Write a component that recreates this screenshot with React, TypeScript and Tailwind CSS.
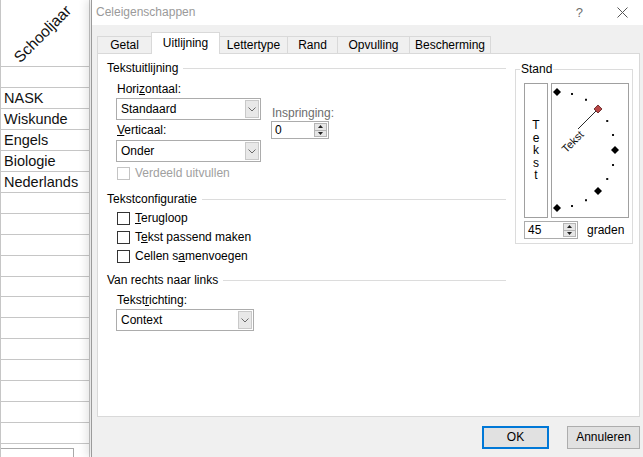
import type { ReactNode } from 'react';

const subjects: string[] = ['NASK', 'Wiskunde', 'Engels', 'Biologie', 'Nederlands'];
const emptyRows: number = 13;

const tabs = [
  { title: 'Getal', width: 'w-[54px]' },
  { title: 'Uitlijning', width: 'w-[69px]', active: true },
  { title: 'Lettertype', width: 'w-[68px]' },
  { title: 'Rand', width: 'w-[50px]' },
  { title: 'Opvulling', width: 'w-[72px]' },
  { title: 'Bescherming', width: 'w-[82px]', last: true },
];

// dial marks, every 15 degrees from top to bottom
const dialMarks = Array.from({ length: 13 }, (_, i) => {
  const rad = ((90 - i * 15) * Math.PI) / 180;
  return {
    x: 5 + 58 * Math.cos(rad),
    y: 66 - 58 * Math.sin(rad),
    kind: i === 3 ? 'red' : i % 3 === 0 ? 'big' : 'dot',
  };
});

function Chevron() {
  return (
    <svg width="8" height="5" viewBox="0 0 8 5">
      <path d="M0.5 0.5 L4 4 L7.5 0.5" fill="none" stroke="#6a6a6a" strokeWidth="1" />
    </svg>
  );
}

function Select({ value, width }: { value: string; width: string }) {
  return (
    <div className={`flex h-[22px] ${width} border border-[#acacac] bg-white`}>
      <div className="flex flex-1 items-center pl-[4px]">{value}</div>
      <div className="m-[1px] flex w-[14px] items-center justify-center border border-[#c9c9c9] bg-[#e8e8e8]">
        <Chevron />
      </div>
    </div>
  );
}

function Spinner({ value, width }: { value: string; width: string }) {
  return (
    <div className={`flex h-[18px] ${width} border border-[#acacac] bg-white`}>
      <div className="flex flex-1 items-center pl-[3px]">{value}</div>
      <div className="my-[1px] mr-[1px] flex w-[13px] flex-col border border-[#b5b5b5]">
        <div className="flex flex-1 items-center justify-center border-b border-[#b5b5b5] bg-[#e6e6e6]">
          <svg width="5" height="3" viewBox="0 0 5 3">
            <path d="M0 3 L2.5 0 L5 3 Z" fill="#222" />
          </svg>
        </div>
        <div className="flex flex-1 items-center justify-center bg-[#e6e6e6]">
          <svg width="5" height="3" viewBox="0 0 5 3">
            <path d="M0 0 L2.5 3 L5 0 Z" fill="#222" />
          </svg>
        </div>
      </div>
    </div>
  );
}

function CheckRow({ children, disabled }: { children: ReactNode; disabled?: boolean }) {
  return (
    <div className={`flex h-[19px] items-center pl-[10px] ${disabled ? 'text-[#a0a0a0]' : ''}`}>
      <div className={`h-[13px] w-[13px] border bg-white ${disabled ? 'border-[#c4c4c4]' : 'border-[#333]'}`} />
      <span className="ml-[5px]">{children}</span>
    </div>
  );
}

function GroupHeader({ label }: { label: string }) {
  return (
    <div className="flex h-[15px] items-center">
      <span>{label}</span>
      <div className="ml-[5px] h-px flex-1 bg-[#dcdcdc]" />
    </div>
  );
}

function Sheet() {
  return (
    <div className="flex w-[90px] flex-col border-r border-l border-[#c6c6c6] bg-white font-['Liberation_Sans',Arial,sans-serif] text-[14.5px] text-[#111]">
      <div className="flex h-[67px] items-center justify-center border-b border-[#c6c6c6] pt-[3px] pr-[4px]">
        <span className="-rotate-45 whitespace-nowrap text-[15.5px] leading-[18px]">Schooljaar</span>
      </div>
      <div className="h-[21px] border-b border-[#c6c6c6]" />
      {subjects.map((s) => (
        <div key={s} className="h-[21px] border-b border-[#c6c6c6] pl-[3px] pt-[1px] leading-[19px]">
          {s}
        </div>
      ))}
      {Array.from({ length: emptyRows - 1 }, (_, i) => (
        <div key={i} className="h-[21px] border-b border-[#c6c6c6]" />
      ))}
      <div className="mt-[4px] h-[9px] w-[73px] border-t border-r border-[#a9a9a9] bg-white" />
    </div>
  );
}

export default function App() {
  return (
    <div className="flex h-[457px] w-[643px] overflow-hidden bg-white">
      <Sheet />
      <div className="ml-[1px] flex h-[457px] flex-1 flex-col border-l border-[#9b9b9b] bg-[#f0f0f0] font-['Liberation_Sans',Arial,sans-serif] text-[12px] leading-[15px] text-black shadow-[-5px_0_8px_rgba(0,0,0,0.10)]">
        {/* title bar */}
        <div className="flex h-[25px] items-center bg-white pl-[4px] pr-[15px] text-[#9a9a9a]">
          <span>Celeigenschappen</span>
          <span className="ml-auto mr-[34px] text-[13px] text-[#6f6f6f]">?</span>
          <svg width="11" height="11" viewBox="0 0 11 11">
            <path d="M0.5 0.5 L10.5 10.5 M10.5 0.5 L0.5 10.5" stroke="#555" strokeWidth="1" />
          </svg>
        </div>

        <div className="pl-[5px] pt-[7px]">
          {/* tabs */}
          <div className="flex h-[21px] items-end">
            {tabs.map((t) =>
              t.active ? (
                <div
                  key={t.title}
                  className={`relative z-10 -mr-px -mb-px flex h-[22px] ${t.width} items-center justify-center border border-b-0 border-[#d9d9d9] bg-white`}
                >
                  {t.title}
                </div>
              ) : (
                <div
                  key={t.title}
                  className={`flex h-[17px] ${t.width} items-center justify-center border-t border-l border-[#d9d9d9] ${t.last ? 'border-r' : ''}`}
                >
                  {t.title}
                </div>
              ),
            )}
          </div>

          {/* panel */}
          <div className="flex h-[364px] w-[543px] border border-[#d9d9d9] bg-white">
            <div className="w-[408px] pl-[9px] pt-[7px]">
              <GroupHeader label="Tekstuitlijning" />
              <div className="flex pl-[9px]">
                <div className="w-[145px]">
                  <div className="mt-[6px] pl-[1px]">
                    Hori<span className="underline">z</span>ontaal:
                  </div>
                  <div className="mt-[1px]">
                    <Select value="Standaard" width="w-[145px]" />
                  </div>
                  <div className="mt-[3px] pl-[1px]">
                    <span className="underline">V</span>erticaal:
                  </div>
                  <div className="mt-[2px]">
                    <Select value="Onder" width="w-[145px]" />
                  </div>
                  <div className="mt-[2px] -ml-[9px]">
                    <CheckRow disabled>Verdeeld uitvullen</CheckRow>
                  </div>
                </div>
                <div className="ml-[10px] pt-[30px]">
                  <div className="pl-[1px] text-[#6d6d6d]">Inspringing:</div>
                  <Spinner value="0" width="w-[58px]" />
                </div>
              </div>

              <div className="mt-[9px]">
                <GroupHeader label="Tekstconfiguratie" />
              </div>
              <div className="mt-[2px]">
                <CheckRow>
                  <span className="underline">T</span>erugloop
                </CheckRow>
                <CheckRow>
                  T<span className="underline">e</span>kst passend maken
                </CheckRow>
                <CheckRow>
                  Cellen s<span className="underline">a</span>menvoegen
                </CheckRow>
              </div>

              <div className="mt-[7px]">
                <GroupHeader label="Van rechts naar links" />
              </div>
              <div className="mt-[5px] pl-[10px]">
                Tekst<span className="underline">r</span>ichting:
              </div>
              <div className="mt-[1px] pl-[9px]">
                <Select value="Context" width="w-[138px]" />
              </div>
            </div>

            {/* Stand */}
            <fieldset className="mt-[8px] ml-[9px] h-[182px] w-[118px] border border-[#dcdcdc] pl-[8px] pt-[6px]">
              <legend className="-ml-[4px] px-[1px]">Stand</legend>
              <div className="flex gap-[3px]">
                <div className="flex h-[135px] w-[24px] flex-col items-center justify-center border border-[#a0a0a0] leading-[12.5px]">
                  {['T', 'e', 'k', 's', 't'].map((c, i) => (
                    <span key={i}>{c}</span>
                  ))}
                </div>
                <div className="h-[135px] w-[78px] border border-[#a0a0a0]">
                  <svg width="76" height="133" viewBox="0 0 76 133">
                    <line x1="26" y1="45" x2="44" y2="27" stroke="#111" strokeWidth="0.9" />
                    {dialMarks.map((m, i) =>
                      m.kind === 'dot' ? (
                        <rect key={i} x={m.x - 1} y={m.y - 1} width="2" height="2" fill="#111" />
                      ) : (
                        <path
                          key={i}
                          d={`M${m.x} ${m.y - 4} L${m.x + 4} ${m.y} L${m.x} ${m.y + 4} L${m.x - 4} ${m.y} Z`}
                          fill={m.kind === 'red' ? '#b84646' : '#000'}
                          stroke={m.kind === 'red' ? '#5a1616' : 'none'}
                          strokeWidth="0.8"
                        />
                      ),
                    )}
                    <text
                      x="20.5"
                      y="57.5"
                      fontSize="11"
                      fontFamily="Liberation Sans, Arial, sans-serif"
                      textAnchor="middle"
                      dominantBaseline="central"
                      transform="rotate(-45 20.5 57.5)"
                      fill="#111"
                    >
                      Tekst
                    </text>
                  </svg>
                </div>
              </div>
              <div className="mt-[3px] flex items-center">
                <Spinner value="45" width="w-[54px]" />
                <span className="ml-[9px]">
                  <span className="underline">g</span>raden
                </span>
              </div>
            </fieldset>
          </div>

          {/* buttons */}
          <div className="mt-[9px] flex justify-end gap-[18px] pr-[3px]">
            <button className="flex h-[23px] w-[67px] items-center justify-center border border-[#0078d7] bg-[#e1e1e1] shadow-[inset_0_0_0_1px_#0078d7]">
              OK
            </button>
            <button className="flex h-[23px] w-[73px] items-center justify-center border border-[#adadad] bg-[#e1e1e1]">
              Annuleren
            </button>
          </div>
        </div>
      </div>
    </div>
  );
}
